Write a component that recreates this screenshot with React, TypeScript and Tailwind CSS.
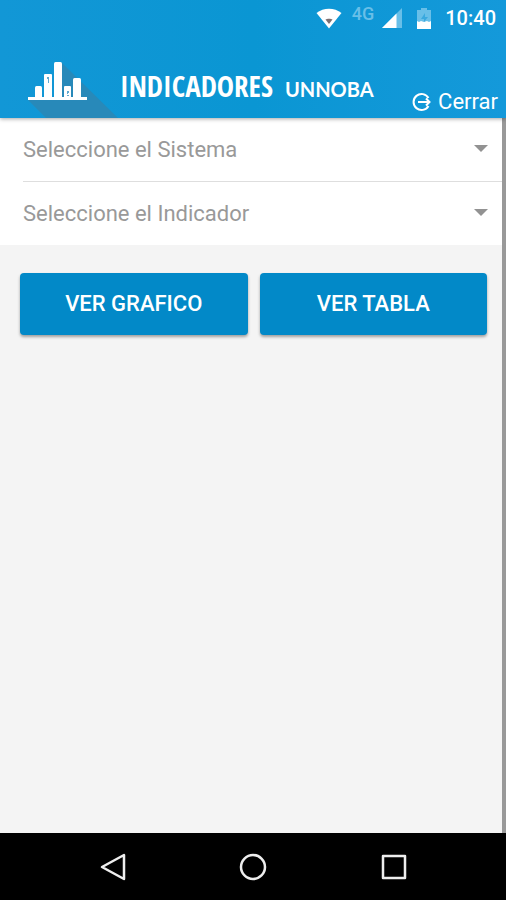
import { useState } from 'react'

interface PickerProps {
  label: string
  options: string[]
}

function Picker({ label, options }: PickerProps) {
  const [value, setValue] = useState('')

  return (
    <div className="relative h-[63px]">
      <select
        aria-label={label}
        value={value}
        onChange={(e) => setValue(e.target.value)}
        className="h-full w-full appearance-none bg-transparent pr-10 text-[22px] text-[#999999] outline-none"
      >
        <option value="">{label}</option>
        {options.map((o) => (
          <option key={o} value={o}>{o}</option>
        ))}
      </select>
      <svg viewBox="0 0 14 7" className="pointer-events-none absolute top-[27px] right-[14px] h-[7px] w-[14px]">
        <path d="M0 0h14L7 7z" fill="#929292" />
      </svg>
    </div>
  )
}

function StatusBar() {
  return (
    <div className="flex h-9 items-center justify-end pr-[10px] text-white">
      {/* Wifi */}
      <svg viewBox="0 0 26 21" className="h-[21px] w-[26px]">
        <path d="M0.500 5C7.500-0.800 18.500-0.800 25.500 5L13 20.500z" fill="#fff" />
        <path d="M9.500 11.500C11 10.500 15 10.500 16.500 11.500L13 16z" fill="#7b6f72" />
      </svg>
      <span className="ml-[10px] pb-2 text-lg leading-none font-medium text-[#68bfe8]">4G</span>
      {/* Signal */}
      <svg viewBox="0 0 20 20" className="ml-2 h-5 w-5">
        <path d="M20 0v20H0z" fill="#68bfe8" />
        <path d="M14.500 5.500V20H0z" fill="#fff" />
      </svg>
      {/* Battery */}
      <svg viewBox="0 0 14 21" className="ml-[15px] h-[21px] w-[14px]">
        <path d="M4 0h6v2h4v12H0V2h4z" fill="#68bfe8" />
        <path d="M0 13l2 1 2-1 3 1 3-1 2 1 2-1v8H0z" fill="#fff" />
        <path d="M8 5L4 11h3v3l4-5H8z" fill="#3aa9df" />
      </svg>
      <span className="ml-[14px] text-xl leading-none font-medium">10:40</span>
    </div>
  )
}

function Logo() {
  return (
    <svg viewBox="0 0 92 58" className="h-[58px] w-[92px] shrink-0">
      <path d="M0 40L18 58H90L34 3V38z" fill="#2889b9" />
      <g fill="#fff">
        <rect x="0" y="37" width="59" height="3" />
        <rect x="7" y="26" width="7" height="12" rx="1.500" />
        <rect x="16" y="14" width="8" height="24" rx="1" />
        <rect x="26" y="2" width="8" height="36" rx="1.500" />
        <rect x="36" y="26" width="7" height="12" rx="1" />
        <rect x="45" y="18" width="8" height="20" rx="1.500" />
      </g>
      <path d="M19 17h2v6h-1v-4h-1zM39 31h2v2h-1v1h-1zM39 35h2v1h-2z" fill="#5fa9d0" />
    </svg>
  )
}

export default function App() {
  return (
    <div className="flex min-h-screen flex-col bg-[#f4f4f4] font-['Roboto',sans-serif]">
      <header className="relative bg-linear-to-r from-[#1297d6] via-[#0a96d3] to-[#1499da] shadow-[0_1px_4px_rgba(0,0,0,0.35)]">
        <StatusBar />
        <div className="flex items-end pt-6 pr-2 pl-7">
          <Logo />
          <h1 className="flex flex-1 items-baseline gap-3 self-start pt-[10px] font-bold whitespace-nowrap text-white">
            <span className="font-['Open_Sans_Condensed','Noto_Sans_Condensed','Roboto_Condensed','Roboto',sans-serif] text-[29px] leading-8">INDICADORES</span>
            <span className="font-['Lato',sans-serif] text-xl leading-8">UNNOBA</span>
          </h1>
          <button type="button" className="flex items-center gap-[6px] pb-1 text-[22px] leading-6 text-white">
            <svg viewBox="0 0 20 20" className="h-5 w-5" fill="none" stroke="#fff" strokeWidth="2">
              <path d="M16.500 6A8 8 0 1 0 16.500 14M6 10h11.500M14 6.500L17.500 10 14 13.500" />
            </svg>
            Cerrar
          </button>
        </div>
      </header>

      <main className="flex-1 border-r-4 border-[#999999]">
        <div className="bg-white pl-[23px]">
          <Picker label="Seleccione el Sistema" options={[]} />
          <div className="border-t border-[#dedede]">
            <Picker label="Seleccione el Indicador" options={[]} />
          </div>
        </div>
        <div className="grid grid-cols-2 gap-3 pt-7 pr-[15px] pl-5 text-[22px] font-medium text-white">
          <button type="button" className="h-[62px] rounded bg-[#0289c8] pb-[2px] shadow-[0_2px_3px_rgba(0,0,0,0.35)]">
            VER GRAFICO
          </button>
          <button type="button" className="h-[62px] rounded bg-[#0289c8] pb-[2px] shadow-[0_2px_3px_rgba(0,0,0,0.35)]">
            VER TABLA
          </button>
        </div>
      </main>

      <nav className="flex h-[67px] items-center justify-center gap-28 bg-black">
        <button type="button" aria-label="Atrás">
          <svg viewBox="0 0 28 28" className="size-7" fill="none" stroke="#eee" strokeWidth="2.500" strokeLinejoin="round">
            <path d="M25 2v24L3 14z" />
          </svg>
        </button>
        <button type="button" aria-label="Inicio">
          <svg viewBox="0 0 28 28" className="size-7" fill="none" stroke="#eee" strokeWidth="2.500">
            <circle cx="14" cy="14" r="12" />
          </svg>
        </button>
        <button type="button" aria-label="Recientes">
          <svg viewBox="0 0 28 28" className="size-7" fill="none" stroke="#eee" strokeWidth="2.500" strokeLinejoin="round">
            <rect x="4" y="3" width="22" height="22" />
          </svg>
        </button>
      </nav>
    </div>
  )
}
